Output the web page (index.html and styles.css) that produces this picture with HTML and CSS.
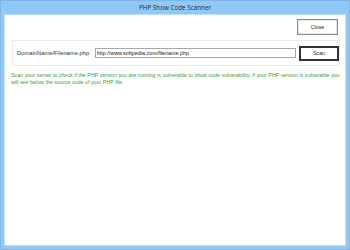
FILE: index.html
```html
<!DOCTYPE html>
<html lang="en">
<head>
  <meta charset="UTF-8">
  <title>PHP Show Code Scanner</title>
  <link rel="stylesheet" href="styles.css">
</head>
<body>

  <div class="window">
    <div class="title-bar">PHP Show Code Scanner</div>

    <div class="client">
      <div class="top-row">
        <button class="btn close-button">Close</button>
      </div>

      <div class="scan-group">
        <span class="domain-label">DomainName/Filename.php</span>
        <input class="url-input" type="text" value="http://www.softpedia.com/filename.php">
        <button class="btn scan-button">Scan</button>
      </div>

      <p class="info-text">Scan your server to check if the PHP version you are running is vulnerable to show code vulnerability. if your PHP version is vulnerable you will see below the source code of your PHP file.</p>
    </div>
  </div>

</body>
</html>
```

FILE: styles.css
```css
body {
  margin: 0;
  padding: 0;
  width: 350px;
  height: 250px;
  overflow: hidden;
  font-family: 'Liberation Sans', Arial, sans-serif;
}

.window {
  height: 250px;
  box-sizing: border-box;
  background-color: #90c8f8;
  border: 1px solid #7fb6e6;
  display: flex;
  flex-direction: column;
  padding: 0 3px 3px 3px;
}

.title-bar {
  height: 13px;
  line-height: 13px;
  text-align: center;
  font-family: 'Open Sans', 'Liberation Sans', sans-serif;
  font-size: 6.3px;
  color: #2b2b2b;
}

.client {
  flex: 1;
  background: white;
  border: 1px solid #c9ddf0;
  display: flex;
  flex-direction: column;
}

.top-row {
  display: flex;
  justify-content: flex-end;
  padding: 4px 7px 0 0;
}

.btn {
  font-family: 'Liberation Sans', Arial, sans-serif;
  font-size: 5.2px;
  color: #222;
  background: white;
  padding: 0;
  cursor: pointer;
}

.close-button {
  width: 41px;
  height: 16px;
  border: 1px solid #8a8a8a;
  box-shadow: inset 0 0 0 1px #e6e6e6;
}

.scan-group {
  display: flex;
  align-items: center;
  margin: 5px 5px 0 7px;
  height: 24px;
  border: 1px solid #ececec;
  padding-left: 4px;
}

.domain-label {
  font-size: 5.8px;
  color: #333;
  width: 78px;
  white-space: nowrap;
}

.url-input {
  width: 198px;
  height: 8px;
  border: 1px solid #a8a8a8;
  padding: 0 1px;
  font-family: 'Liberation Sans', Arial, sans-serif;
  font-size: 5.4px;
  color: #222;
  outline: none;
}

.scan-button {
  width: 40px;
  height: 15px;
  margin-left: 3px;
  border: 2px solid #333;
}

.info-text {
  margin: 6px 0 0 6px;
  width: 334px;
  font-size: 5.35px;
  line-height: 7px;
  color: #3a9e3a;
}
```
